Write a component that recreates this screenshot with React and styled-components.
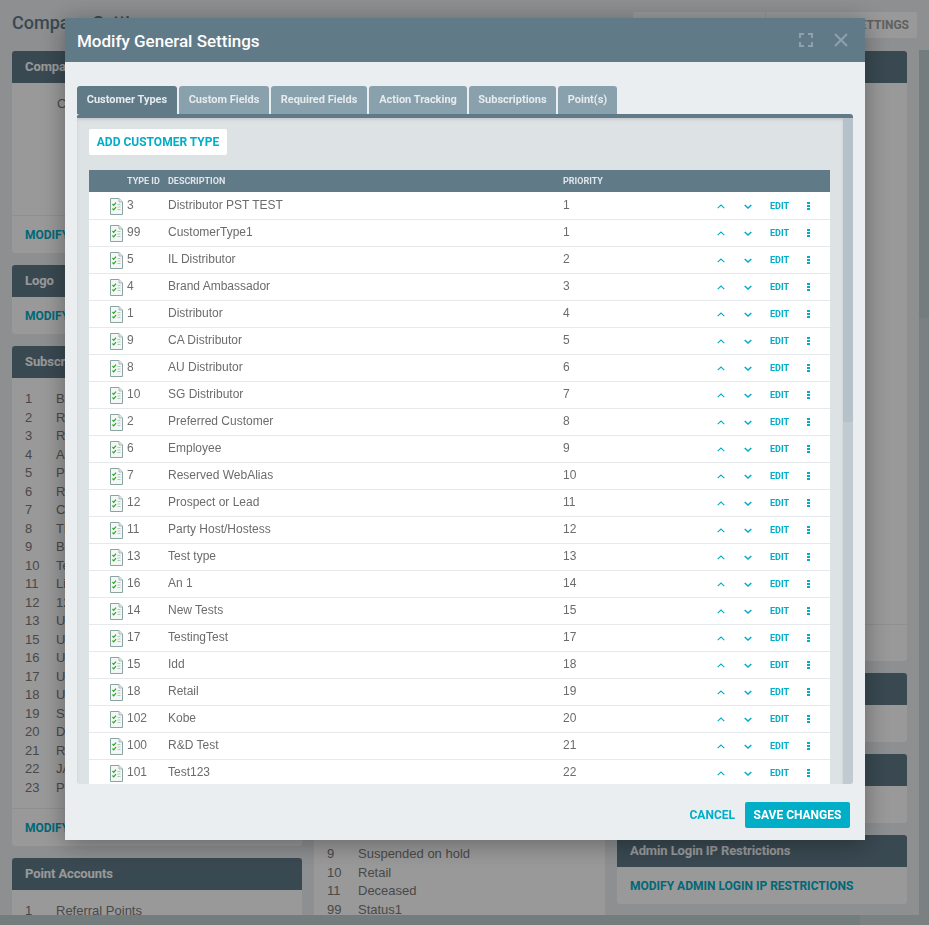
import React from 'react';
import styled, { createGlobalStyle } from 'styled-components';

const GlobalStyle = createGlobalStyle`
  html, body {
    margin: 0;
    height: 100%;
    overflow: hidden;
    background: #ebeef1;
  }
  #root {
    height: 100%;
  }
`;

const ACCENT = '#00aec7';
const ROBOTO = 'Roboto, "Liberation Sans", sans-serif';
const ARIAL = '"Liberation Sans", Arial, sans-serif';

const Page = styled.div`
  height: 925px;
  display: flex;
  flex-direction: column;
  overflow: hidden;
  font-family: ${ARIAL};
  font-size: 13px;
  color: #7a7a7a;
`;

const Topbar = styled.div`
  height: 50px;
  flex: none;
  display: flex;
  justify-content: space-between;
  align-items: flex-start;
  padding: 12px 12px 0;
  box-sizing: border-box;
`;

const PageTitle = styled.h1`
  margin: 0;
  font: 500 18px/22px ${ROBOTO};
  color: #5f7a88;
`;

const TopActions = styled.div`
  display: flex;
  gap: 1px;
`;

const TopButton = styled.button`
  height: 26px;
  width: ${props => props.$width}px;
  border: none;
  border-radius: 2px;
  background: #fff;
  color: #a0a0a0;
  font: 700 12px ${ROBOTO};
  text-align: right;
  padding: 0 8px;
`;

const Workspace = styled.div`
  flex: 1;
  min-height: 0;
  display: flex;
`;

const ScrollArea = styled.div`
  flex: 1;
  min-width: 0;
  display: flex;
  flex-direction: column;
`;

const Columns = styled.div`
  flex: 1;
  min-height: 0;
  overflow: hidden;
  display: grid;
  grid-template-columns: 290px 291px 290px;
  column-gap: 12px;
  padding: 1px 12px 0;
`;

const Column = styled.div`
  display: flex;
  flex-direction: column;
  gap: 12px;
`;

const Card = styled.section`
  flex: none;
  background: #fff;
  border-radius: 3px;
  overflow: hidden;
`;

const CardHead = styled.h2`
  margin: 0;
  height: 32px;
  padding: 0 13px;
  background: #607a88;
  color: #fff;
  font: 700 13px/32px ${ROBOTO};
  letter-spacing: -0.1px;
`;

const CardBody = styled.div`
  box-sizing: border-box;
  padding: 12px 13px 11px;
  min-height: ${props => props.$minHeight || 0}px;
  display: flex;
  flex-direction: column;
  justify-content: ${props => (props.$bottom ? 'flex-end' : 'flex-start')};
`;

const CardFoot = styled.div`
  box-sizing: border-box;
  height: ${props => props.$height || 37}px;
  padding: 0 13px;
  display: flex;
  align-items: center;
  border-top: ${props => (props.$ruled ? '1px solid #ebeef1' : 'none')};
`;

const CardLink = styled.a`
  color: ${ACCENT};
  font: 700 12px ${ROBOTO};
  white-space: nowrap;
`;

const ListRow = styled.div`
  display: grid;
  grid-template-columns: 31px 1fr;
  line-height: 18.5px;
  white-space: nowrap;
`;

const SettingLine = styled.div`
  padding-left: ${props => props.$indent}px;
  line-height: 18.5px;
  white-space: nowrap;
`;

const PageScrollThumb = styled.div`
  height: 10px;
  flex: none;
  background: linear-gradient(to right, #c2d0d2 860px, #cdd6da 860px);
`;

const SideScroll = styled.div`
  width: 10px;
  flex: none;
  background: linear-gradient(to bottom, #c2d0d2 268px, #cdd6da 268px);
`;

const Overlay = styled.div`
  position: fixed;
  inset: 0;
  background: rgba(0, 0, 0, 0.4);
  display: flex;
  align-items: flex-start;
  padding: 18px 0 0 65px;
`;

const Modal = styled.div`
  width: 800px;
  height: 822px;
  display: flex;
  flex-direction: column;
  background: #ebeef1;
  box-shadow: 0 4px 24px rgba(0, 0, 0, 0.35);
`;

const ModalHeader = styled.header`
  height: 44px;
  flex: none;
  display: flex;
  align-items: center;
  padding: 0 17px 0 12px;
  background: #607a88;
`;

const ModalTitle = styled.h3`
  flex: 1;
  margin: 0;
  padding-top: 2px;
  color: #fff;
  font: 500 17px ${ROBOTO};
`;

const HeaderIcon = styled.svg`
  display: block;
  margin-left: ${props => props.$gap || 0}px;
`;

const ModalBody = styled.div`
  flex: 1;
  min-height: 0;
  display: flex;
  flex-direction: column;
  padding: 24px 12px 0;
`;

const TabList = styled.div`
  display: flex;
  gap: 2px;
  flex: none;
`;

const Tab = styled.button`
  height: 28px;
  width: ${props => props.$width}px;
  padding: 0 0 2px;
  border: none;
  border-radius: 3px 3px 0 0;
  background: ${props => (props.$active ? '#607a88' : '#89a0ad')};
  color: #e6ebee;
  font: 700 11px ${ROBOTO};
`;

const TabPanel = styled.div`
  flex: 1;
  min-height: 0;
  display: flex;
  border-top: 4px solid #607a88;
  border-radius: 3px;
  overflow: hidden;
  background: #dde2e5;
`;

const PanelContent = styled.div`
  flex: 1;
  min-width: 0;
  overflow: hidden;
  padding: 11px 13px 0 12px;
  box-shadow: inset 0 2px 3px rgba(0, 0, 0, 0.1);
`;

const PanelScroll = styled.div`
  width: 10px;
  flex: none;
  background: linear-gradient(to bottom, #b5c2ca 304px, #c1cad1 304px);
`;

const AddButton = styled.button`
  display: block;
  height: 26px;
  width: 138px;
  padding: 0;
  border: none;
  border-radius: 2px;
  background: #fff;
  color: ${ACCENT};
  font: 700 12px ${ROBOTO};
`;

const Table = styled.table`
  width: 741px;
  margin-top: 15px;
  table-layout: fixed;
  border-collapse: separate;
  border-spacing: 0;
  background: #fff;
`;

const HeadCell = styled.th`
  box-sizing: border-box;
  height: 23px;
  padding: 0;
  background: #607a88;
  background-clip: padding-box;
  border-bottom: 1px solid #fff;
  color: #dfe5e8;
  font: 700 9px ${ROBOTO};
  text-align: left;
  text-transform: uppercase;
`;

const Cell = styled.td`
  box-sizing: border-box;
  height: 27px;
  padding: 0 0 ${props => (props.$text ? 2 : 0)}px;
  border-bottom: 1px solid #e6e9ec;
  color: #6c6c6c;
  font: 12px ${ARIAL};
  text-align: ${props => (props.$center ? 'center' : 'left')};
  vertical-align: middle;
`;

const EditLink = styled.a`
  display: block;
  padding-bottom: 1px;
  color: ${ACCENT};
  font: 700 9px ${ROBOTO};
`;

const RowIcon = styled.svg`
  display: block;
  margin: 1px 0 0 21px;
`;

const ActionIcon = styled.svg`
  display: inline-block;
  vertical-align: middle;
  margin-bottom: ${props => props.$lift || 0}px;
`;

const ModalFooter = styled.footer`
  height: 56px;
  flex: none;
  box-sizing: border-box;
  display: flex;
  justify-content: flex-end;
  align-items: center;
  gap: 10px;
  padding: 6px 15px 0 0;
`;

const CancelButton = styled.button`
  padding: 0;
  border: none;
  background: none;
  color: ${ACCENT};
  font: 700 12px ${ROBOTO};
`;

const SaveButton = styled.button`
  height: 26px;
  width: 105px;
  padding: 0;
  border: none;
  border-radius: 2px;
  background: ${ACCENT};
  color: #fff;
  font: 700 12px ${ROBOTO};
`;

const FileCheckIcon = () => (
  <RowIcon width="13" height="17" viewBox="0 0 13 17">
    <path d="M.5.5H9L12.5 4V16.5H.5Z" fill="#f3f8f7" stroke="#8aa5a1" />
    <path d="M9 .5V4H12.5" fill="#dce8e6" stroke="#a6bab7" />
    <path d="M2.5 6 3.7 7.3 6 4.6M2.5 10.5 3.7 11.8 6 9.1" fill="none" stroke="#22a822" strokeWidth="1.2" />
    <path d="M7.5 6.5H10.5M7.5 9H10.5M7.5 11.5H10.5" stroke="#b7c4c2" />
  </RowIcon>
);

const UpIcon = () => (
  <ActionIcon width="8" height="5" viewBox="0 0 8 5">
    <path d="M.7 4.2 4 1 7.3 4.2" fill="none" stroke={ACCENT} strokeWidth="1.1" />
  </ActionIcon>
);

const DownIcon = () => (
  <ActionIcon width="8" height="5" viewBox="0 0 8 5">
    <path d="M.7 1 4 4 7.3 1" fill="none" stroke={ACCENT} strokeWidth="1.5" />
  </ActionIcon>
);

const DotsIcon = () => (
  <ActionIcon $lift={2} width="3" height="8" viewBox="0 0 3 8">
    <path d="M0 0H3V2H0ZM0 3H3V5H0ZM0 6H3V8H0Z" fill={ACCENT} />
  </ActionIcon>
);

const tabs = [
  ['Customer Types', 100],
  ['Custom Fields', 90],
  ['Required Fields', 96],
  ['Action Tracking', 98],
  ['Subscriptions', 87],
  ['Point(s)', 59],
];

const customerTypes = [
  [3, 'Distributor PST TEST', 1],
  [99, 'CustomerType1', 1],
  [5, 'IL Distributor', 2],
  [4, 'Brand Ambassador', 3],
  [1, 'Distributor', 4],
  [9, 'CA Distributor', 5],
  [8, 'AU Distributor', 6],
  [10, 'SG Distributor', 7],
  [2, 'Preferred Customer', 8],
  [6, 'Employee', 9],
  [7, 'Reserved WebAlias', 10],
  [12, 'Prospect or Lead', 11],
  [11, 'Party Host/Hostess', 12],
  [13, 'Test type', 13],
  [16, 'An 1', 14],
  [14, 'New Tests', 15],
  [17, 'TestingTest', 17],
  [15, 'Idd', 18],
  [18, 'Retail', 19],
  [102, 'Kobe', 20],
  [100, 'R&D Test', 21],
  [101, 'Test123', 22],
];

const subscriptions = [
  [1, 'Basic'], [2, 'Renewal'], [3, 'Retail'], [4, 'Autoship'], [5, 'Partner'],
  [6, 'Reseller'], [7, 'Club'], [8, 'Thrive'], [9, 'Beauty'], [10, 'Test'],
  [11, 'Lifestyle'], [12, '12 Month'], [13, 'US Basic'], [15, 'US Plus'],
  [16, 'US Pro'], [17, 'US Elite'], [18, 'US Team'], [19, 'Starter'],
  [20, 'Dealer'], [21, 'Royalty'], [22, 'JAN Promo'], [23, 'Premium'],
];

const statuses = [
  [1, 'Active'], [2, 'Terminated'], [3, 'Inactive'], [4, 'Cancelled'],
  [5, 'Pending'], [6, 'Suspended'], [7, 'On hold'], [8, 'Deleted'],
  [9, 'Suspended on hold'], [10, 'Retail'], [11, 'Deceased'], [99, 'Status1'],
];

const App = () => (
  <>
    <GlobalStyle />
    <Page>
      <Topbar>
        <PageTitle>Company Settings</PageTitle>
        <TopActions>
          <TopButton $width={132}>MODIFY</TopButton>
          <TopButton $width={151}>GENERAL SETTINGS</TopButton>
        </TopActions>
      </Topbar>
      <Workspace>
        <ScrollArea>
          <Columns>
            <Column>
              <Card>
                <CardHead>Company Information</CardHead>
                <CardBody $minHeight={132}>
                  <SettingLine $indent={32}>Company Name</SettingLine>
                </CardBody>
                <CardFoot $ruled $height={38}>
                  <CardLink>MODIFY COMPANY INFORMATION</CardLink>
                </CardFoot>
              </Card>
              <Card>
                <CardHead>Logo</CardHead>
                <CardFoot>
                  <CardLink>MODIFY LOGO</CardLink>
                </CardFoot>
              </Card>
              <Card>
                <CardHead>Subscriptions</CardHead>
                <CardBody>
                  {subscriptions.map(([id, name]) => (
                    <ListRow key={id}>
                      <span>{id}</span>
                      <span>{name}</span>
                    </ListRow>
                  ))}
                </CardBody>
                <CardFoot $ruled $height={38}>
                  <CardLink>MODIFY SUBSCRIPTIONS</CardLink>
                </CardFoot>
              </Card>
              <Card>
                <CardHead>Point Accounts</CardHead>
                <CardBody>
                  <ListRow>
                    <span>1</span>
                    <span>Referral Points</span>
                  </ListRow>
                </CardBody>
              </Card>
            </Column>
            <Column>
              <Card>
                <CardHead>General</CardHead>
                <CardBody $minHeight={558} />
              </Card>
              <Card>
                <CardHead>Customer Statuses</CardHead>
                <CardBody>
                  {statuses.map(([id, name]) => (
                    <ListRow key={id}>
                      <span>{id}</span>
                      <span>{name}</span>
                    </ListRow>
                  ))}
                </CardBody>
              </Card>
            </Column>
            <Column>
              <Card>
                <CardHead>Settings</CardHead>
                <CardBody $minHeight={541} $bottom>
                  <SettingLine $indent={31}>Allow customers to edit own details</SettingLine>
                </CardBody>
                <CardFoot $ruled>
                  <CardLink>MODIFY SETTINGS</CardLink>
                </CardFoot>
              </Card>
              <Card>
                <CardHead>Password Settings</CardHead>
                <CardFoot>
                  <CardLink>MODIFY PASSWORD SETTINGS</CardLink>
                </CardFoot>
              </Card>
              <Card>
                <CardHead>Login Settings</CardHead>
                <CardFoot>
                  <CardLink>MODIFY LOGIN SETTINGS</CardLink>
                </CardFoot>
              </Card>
              <Card>
                <CardHead>Admin Login IP Restrictions</CardHead>
                <CardFoot>
                  <CardLink>MODIFY ADMIN LOGIN IP RESTRICTIONS</CardLink>
                </CardFoot>
              </Card>
            </Column>
          </Columns>
          <PageScrollThumb />
        </ScrollArea>
        <SideScroll />
      </Workspace>
      <Overlay>
        <Modal>
          <ModalHeader>
            <ModalTitle>Modify General Settings</ModalTitle>
            <HeaderIcon width="14" height="14" viewBox="0 0 14 14">
              <path d="M1 5V1H5M9 1H13V5M13 9V13H9M5 13H1V9" fill="none" stroke="#8ca2ae" strokeWidth="2" />
            </HeaderIcon>
            <HeaderIcon $gap={21} width="14" height="14" viewBox="0 0 14 14">
              <path d="M1 1 13 13M13 1 1 13" fill="none" stroke="#8ca2ae" strokeWidth="2" />
            </HeaderIcon>
          </ModalHeader>
          <ModalBody>
            <TabList>
              {tabs.map(([label, width], index) => (
                <Tab key={label} $width={width} $active={index === 0} type="button">
                  {label}
                </Tab>
              ))}
            </TabList>
            <TabPanel>
              <PanelContent>
                <AddButton type="button">ADD CUSTOMER TYPE</AddButton>
                <Table>
                  <colgroup>
                    <col width="38" />
                    <col width="41" />
                    <col width="395" />
                    <col width="145" />
                    <col width="25" />
                    <col width="29" />
                    <col width="35" />
                    <col width="23" />
                    <col width="10" />
                  </colgroup>
                  <thead>
                    <tr>
                      <HeadCell />
                      <HeadCell>Type ID</HeadCell>
                      <HeadCell>Description</HeadCell>
                      <HeadCell>Priority</HeadCell>
                      <HeadCell colSpan={5} />
                    </tr>
                  </thead>
                  <tbody>
                    {customerTypes.map(([id, description, priority]) => (
                      <tr key={id}>
                        <Cell>
                          <FileCheckIcon />
                        </Cell>
                        <Cell $text>{id}</Cell>
                        <Cell $text>{description}</Cell>
                        <Cell $text>{priority}</Cell>
                        <Cell $center>
                          <UpIcon />
                        </Cell>
                        <Cell $center>
                          <DownIcon />
                        </Cell>
                        <Cell $center>
                          <EditLink>EDIT</EditLink>
                        </Cell>
                        <Cell $center>
                          <DotsIcon />
                        </Cell>
                        <Cell />
                      </tr>
                    ))}
                  </tbody>
                </Table>
              </PanelContent>
              <PanelScroll />
            </TabPanel>
          </ModalBody>
          <ModalFooter>
            <CancelButton type="button">CANCEL</CancelButton>
            <SaveButton type="button">SAVE CHANGES</SaveButton>
          </ModalFooter>
        </Modal>
      </Overlay>
    </Page>
  </>
);

export default App;
